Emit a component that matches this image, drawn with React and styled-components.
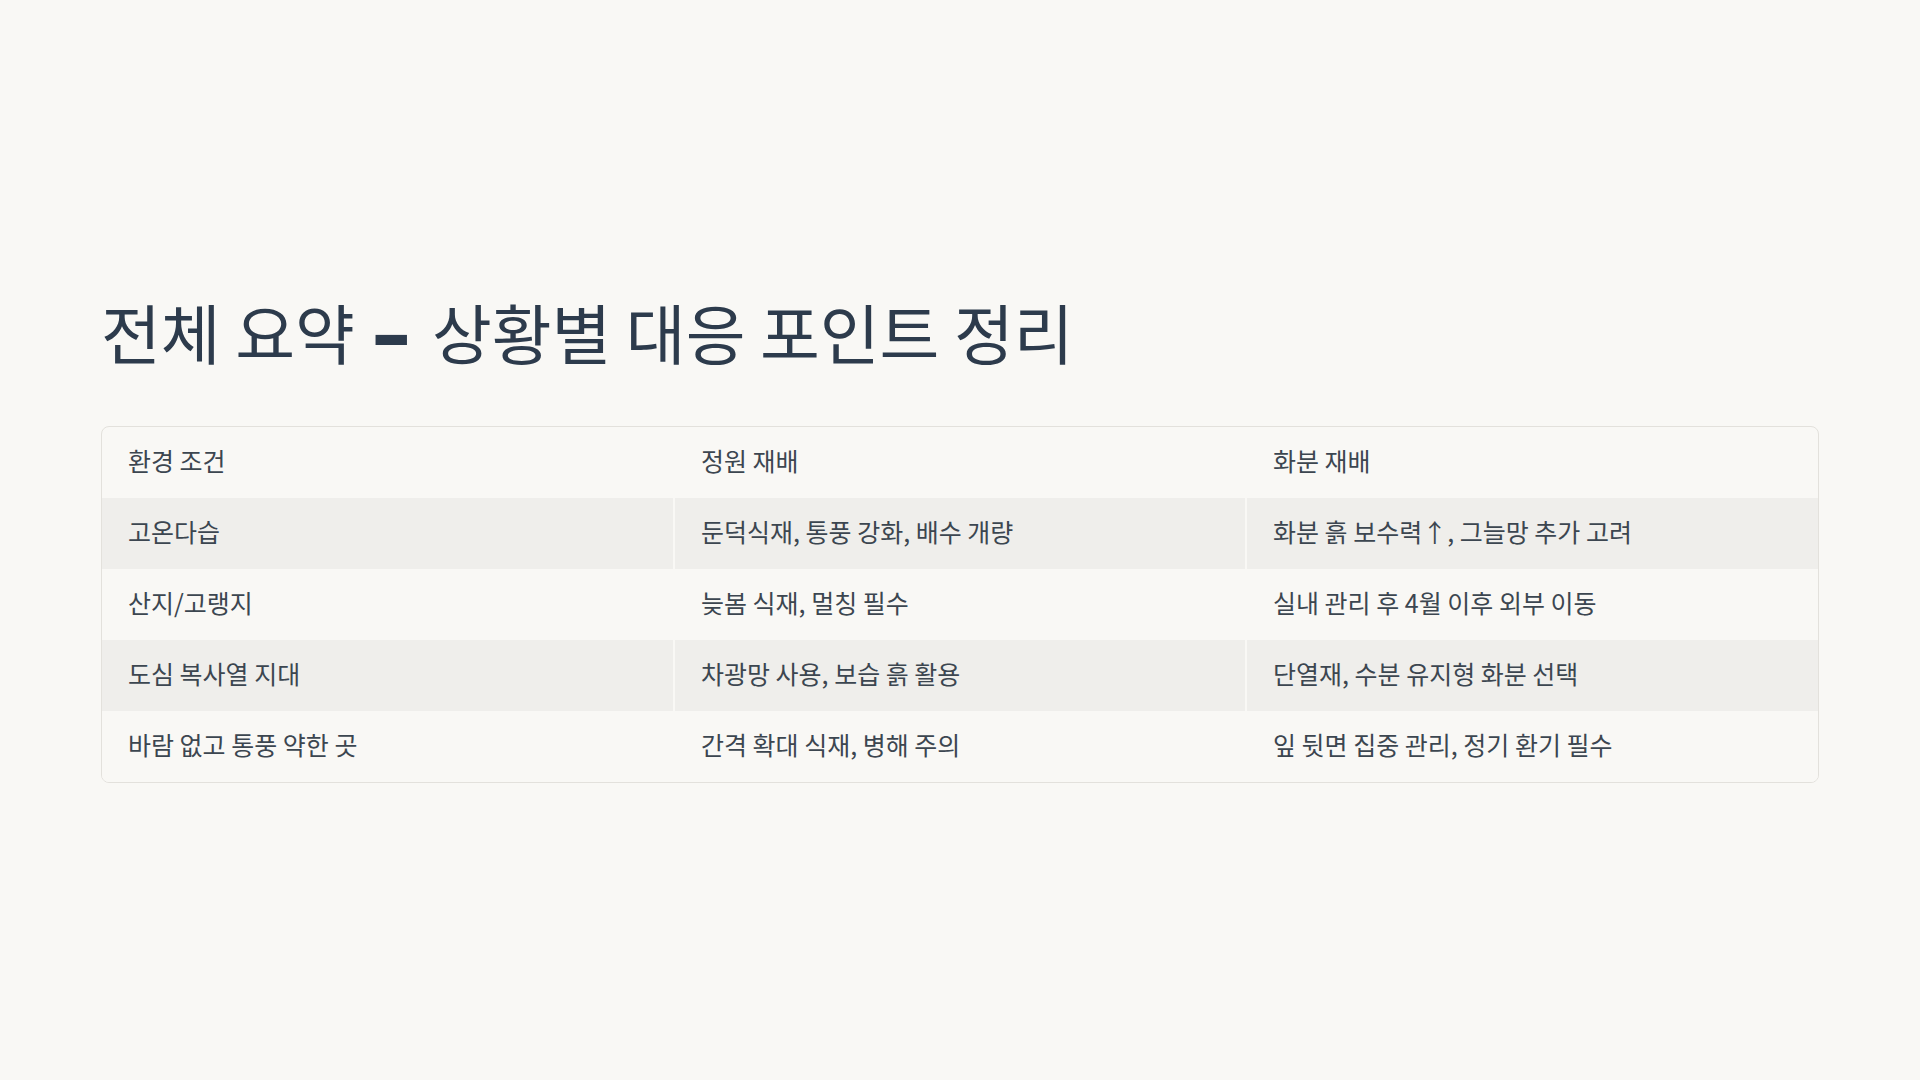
import React from "react";
import styled, { createGlobalStyle } from "styled-components";

const rows = [
  ["고온다습", "둔덕식재, 통풍 강화, 배수 개량", "화분 흙 보수력↑, 그늘망 추가 고려"],
  ["산지/고랭지", "늦봄 식재, 멀칭 필수", "실내 관리 후 4월 이후 외부 이동"],
  ["도심 복사열 지대", "차광망 사용, 보습 흙 활용", "단열재, 수분 유지형 화분 선택"],
  ["바람 없고 통풍 약한 곳", "간격 확대 식재, 병해 주의", "잎 뒷면 집중 관리, 정기 환기 필수"],
];

export default function App() {
  return (
    <>
      <GlobalStyle />
      <Page>
        <Title>
          전체 요약 <Dash>–</Dash> 상황별 대응 포인트 정리
        </Title>
        <TableWrap>
          <Table>
            <thead>
              <tr>
                <Th>환경 조건</Th>
                <Th>정원 재배</Th>
                <Th>화분 재배</Th>
              </tr>
            </thead>
            <tbody>
              {rows.map((row, i) => (
                <Tr key={i} $striped={i % 2 === 0}>
                  {row.map((cell, j) => (
                    <Td key={j}>{cell}</Td>
                  ))}
                </Tr>
              ))}
            </tbody>
          </Table>
        </TableWrap>
      </Page>
    </>
  );
}

const GlobalStyle = createGlobalStyle`
  html, body {
    margin: 0;
    padding: 0;
    background: #f9f8f5;
  }
  body {
    font-family: "Noto Sans CJK KR", "Noto Sans", sans-serif;
  }
`;

const Page = styled.main`
  min-height: 100vh;
  box-sizing: border-box;
  display: flex;
  flex-direction: column;
  justify-content: center;
  padding: 0 101px;
`;

const Title = styled.h1`
  margin: 0 0 58px;
  font-size: 65px;
  font-weight: 400;
  line-height: 66px;
  color: #2d3b4c;
`;

const Dash = styled.span`
  font-family: "DejaVu Sans", sans-serif;
  font-size: 80px;
  font-weight: 700;
  vertical-align: -3px;
  margin: 0 6px 0 2px;
`;

const TableWrap = styled.div`
  border: 1px solid #e3e1dc;
  border-radius: 8px;
  overflow: hidden;
`;

const Table = styled.table`
  width: 100%;
  border-collapse: collapse;
  table-layout: fixed;
`;

const Th = styled.th`
  height: 66px;
  padding: 0 26px 5px;
  text-align: left;
  font-size: 25px;
  font-weight: 400;
  color: #3c4650;
  border-right: 2px solid #f9f8f5;
  &:last-child {
    border-right: none;
  }
`;

const Tr = styled.tr`
  background: ${(p) => (p.$striped ? "#efeeeb" : "#f9f8f5")};
`;

const Td = styled.td`
  height: 66px;
  padding: 0 26px 5px;
  font-size: 25px;
  color: #3c4650;
  border-right: 2px solid #f9f8f5;
  &:last-child {
    border-right: none;
  }
`;
